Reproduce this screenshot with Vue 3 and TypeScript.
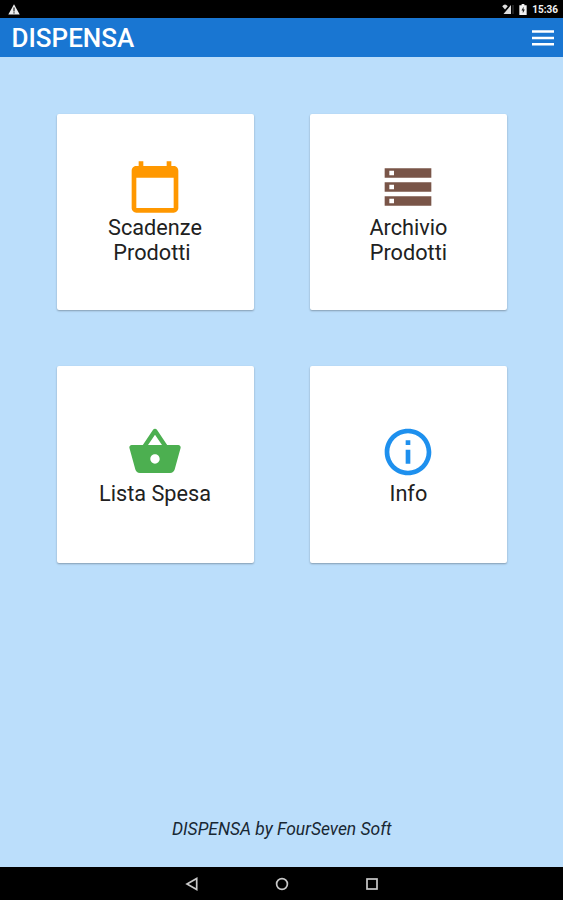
<script setup lang="ts">
interface Tile {
  lines: string[]
  tone: string
  path: string
}

const tiles: Tile[] = [
  {
    lines: ['Scadenze', 'Prodotti'],
    tone: 'orange',
    path: 'M20 3h-1V1h-2v2H7V1H5v2H4c-1.1 0-2 .9-2 2v16c0 1.1.9 2 2 2h16c1.1 0 2-.9 2-2V5c0-1.1-.9-2-2-2zm0 18H4V8h16v13z',
  },
  {
    lines: ['Archivio', 'Prodotti'],
    tone: 'brown',
    path: 'M2 20h20v-4H2v4zm2-3h2v2H4v-2zM2 4v4h20V4H2zm4 3H4V5h2v2zm-4 7h20v-4H2v4zm2-3h2v2H4v-2z',
  },
  {
    lines: ['Lista Spesa'],
    tone: 'green',
    path: 'M17.21 9l-4.38-6.56c-.19-.28-.51-.42-.83-.42-.32 0-.64.14-.83.43L6.79 9H2c-.55 0-1 .45-1 1 0 .09.01.18.04.27l2.54 9.27c.23.84 1 1.46 1.92 1.46h13c.92 0 1.69-.62 1.93-1.46l2.54-9.27L23 10c0-.55-.45-1-1-1h-4.79zM9 9l3-4.4L15 9H9zm3 8c-1.1 0-2-.9-2-2s.9-2 2-2 2 .9 2 2-.9 2-2 2z',
  },
  {
    lines: ['Info'],
    tone: 'blue',
    path: 'M11 17h2v-6h-2v6zm1-15C6.48 2 2 6.48 2 12s4.48 10 10 10 10-4.48 10-10S17.52 2 12 2zm0 18c-4.41 0-8-3.59-8-8s3.59-8 8-8 8 3.59 8 8-3.59 8-8 8zM11 9h2V7h-2v2z',
  },
]
</script>

<template>
  <div class="screen">
    <div class="status">
      <svg class="warn" viewBox="0 0 12 11"><path d="M6 0.3L11.7 10.5H0.3z" fill="#eee" /><path d="M5.4 3.6h1.2v3.8H5.4zM5.4 8.2h1.2v1.3H5.4z" fill="#222" /></svg>
      <div class="status-right">
        <svg class="signal" viewBox="0 0 12 11">
          <path d="M9 1v9H1.5z" fill="#ddd" />
          <path d="M0 0h6v5H3z" fill="#000" />
          <path d="M.2 2.2Q3-1 5.8 2.2L3 5.6z" fill="#ddd" />
          <path d="M11 1v9" stroke="#444" />
        </svg>
        <svg class="battery" viewBox="0 0 8 12"><path d="M2.5 0h3v1.3H8V12H0V1.3h2.5z" fill="#f2f2f2" /><path d="M4.6 3L2.3 7h1.5v3L6 6H4.6z" fill="#222" /></svg>
        <span class="time">15:36</span>
      </div>
    </div>
    <header class="bar">
      <h1>DISPENSA</h1>
      <svg class="menu" viewBox="0 0 22 16"><path d="M0 1.5h22M0 7.9h22M0 14.2h22" stroke="#fff" stroke-width="2.5" /></svg>
    </header>
    <main class="content">
      <div class="grid">
        <button v-for="tile in tiles" :key="tile.tone" class="tile" type="button">
          <svg class="icon" :class="tile.tone" viewBox="0 0 24 24"><path :d="tile.path" /></svg>
          <span v-for="line in tile.lines" :key="line" class="label" :class="{ shifted: tile.tone === 'orange' && line === 'Prodotti' }">{{ line }}</span>
        </button>
      </div>
      <footer class="credit">DISPENSA by FourSeven Soft</footer>
    </main>
    <nav class="nav">
      <svg viewBox="0 0 14 14"><path d="M11.7 1.5v11L2 7z" /></svg>
      <svg viewBox="0 0 14 14"><circle cx="7" cy="7" r="5.4" /></svg>
      <svg viewBox="0 0 14 14"><rect x="2" y="2" width="10" height="10" /></svg>
    </nav>
  </div>
</template>

<style>
body {
  margin: 0;
}
</style>

<style scoped>
.screen {
  display: flex;
  flex-direction: column;
  width: 563px;
  height: 900px;
  overflow: hidden;
  background: #bbdefb;
  font-family: Roboto, "Liberation Sans", sans-serif;
}
.status {
  display: flex;
  justify-content: space-between;
  align-items: center;
  box-sizing: border-box;
  height: 18px;
  padding: 0 5px 0 8px;
  background: #000;
}
.warn {
  width: 12px;
  height: 11px;
}
.status-right {
  display: flex;
  align-items: center;
}
.signal {
  width: 12px;
  height: 11px;
  margin-right: 5px;
}
.battery {
  width: 8px;
  height: 11px;
  margin-right: 5px;
}
.time {
  color: #f2f2f2;
  font-size: 10px;
  font-weight: 700;
  line-height: 18px;
  padding-top: 2px;
}
.bar {
  display: flex;
  justify-content: space-between;
  align-items: center;
  box-sizing: border-box;
  height: 39px;
  padding: 0 9px 0 11.5px;
  background: #1976d2;
}
h1 {
  margin: 2px 0 0;
  color: #fff;
  font-size: 26px;
  font-weight: 500;
  line-height: 37px;
}
.menu {
  width: 22px;
  height: 16px;
}
.content {
  display: flex;
  flex-direction: column;
  justify-content: space-between;
  box-sizing: border-box;
  height: 810px;
  padding: 56.5px 56px 27px 56.5px;
}
.grid {
  display: grid;
  grid-template-columns: 197px 197px;
  grid-auto-rows: 196.6px;
  gap: 56.4px;
}
.tile {
  display: flex;
  flex-direction: column;
  align-items: center;
  justify-content: center;
  padding: 0.5px 0 0;
  border: 0;
  border-radius: 2px;
  background: #fff;
  box-shadow: 0 1px 2px rgba(0, 0, 0, 0.3);
  font-family: inherit;
}
.icon {
  width: 56px;
  height: 56px;
  margin-bottom: 0.5px;
}
.orange {
  fill: #ff9800;
}
.brown {
  fill: #795548;
}
.green {
  fill: #4caf50;
}
.blue {
  fill: #1e90ee;
}
.label {
  color: #212121;
  font-size: 21.7px;
  line-height: 25px;
}
.shifted {
  padding-right: 6px;
}
.credit {
  color: #182733;
  font-size: 17.45px;
  font-style: italic;
  line-height: 22px;
  text-align: center;
}
.nav {
  display: flex;
  justify-content: center;
  align-items: center;
  gap: 76px;
  height: 33px;
  background: #000;
}
.nav svg {
  width: 14px;
  height: 14px;
  fill: none;
  stroke: #c8c8c8;
  stroke-width: 1.7;
}
</style>
